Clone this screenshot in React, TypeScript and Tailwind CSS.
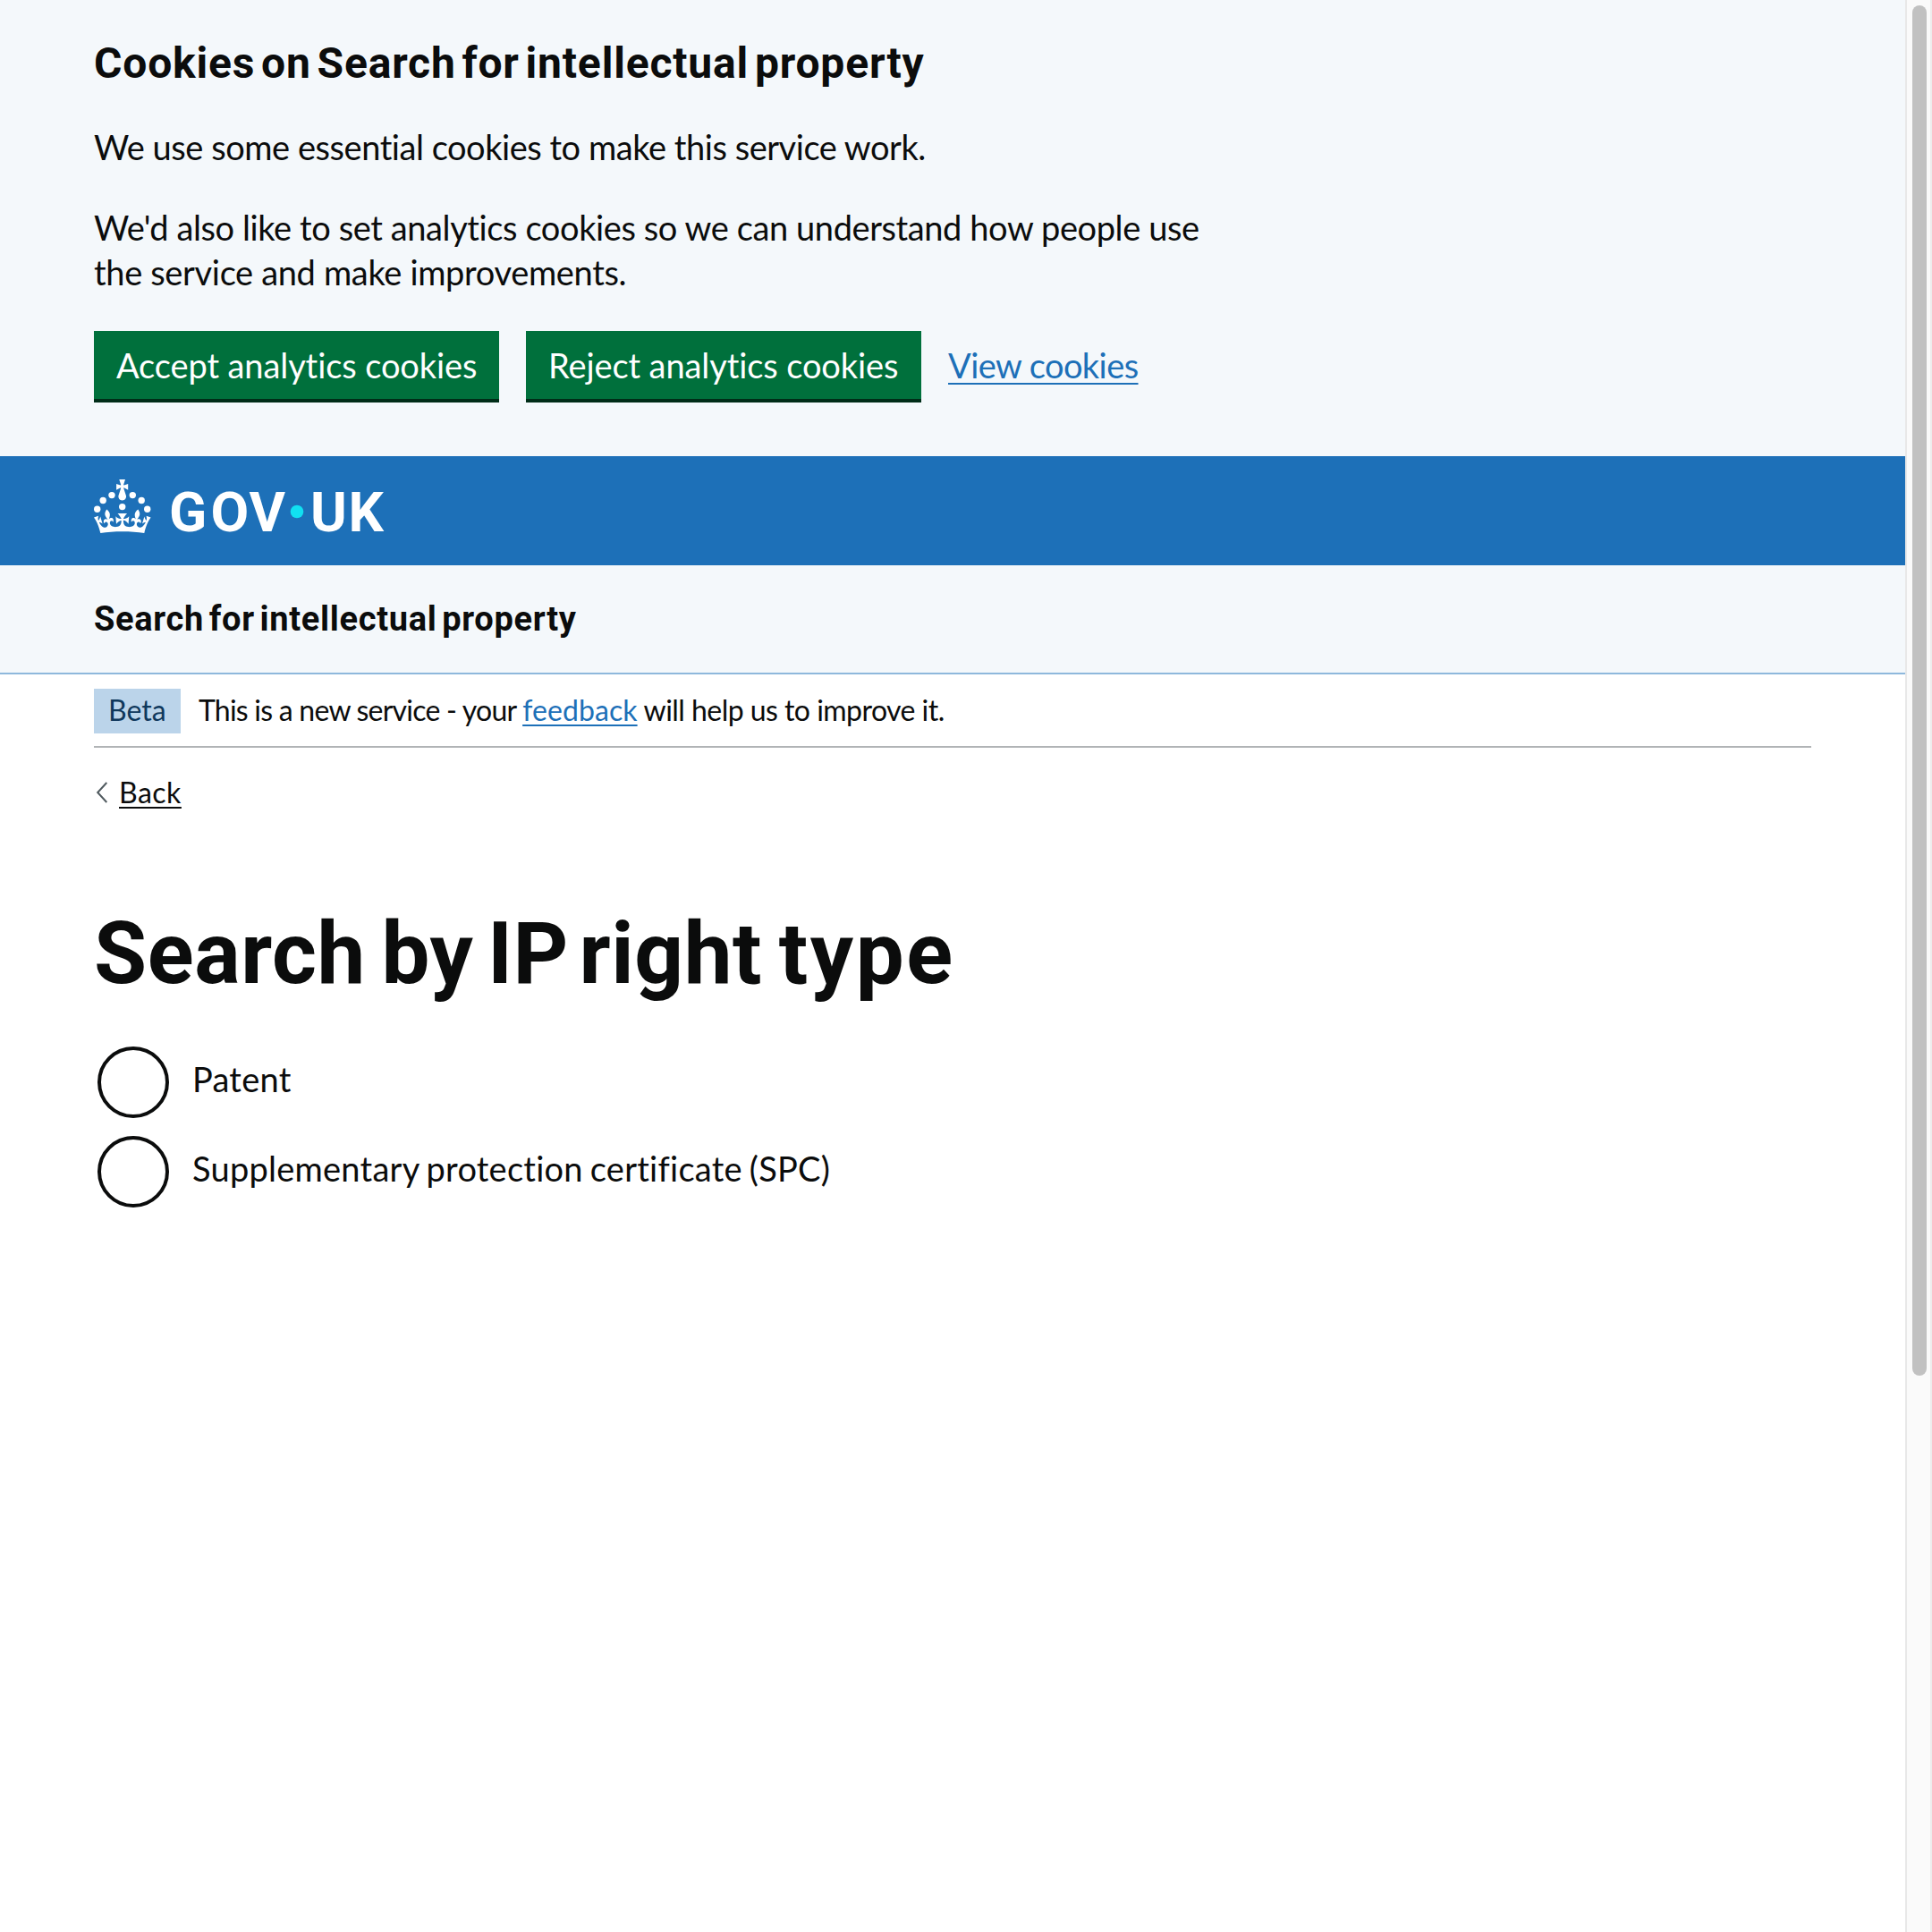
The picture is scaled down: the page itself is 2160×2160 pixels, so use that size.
function Logo() {
  return (
    <svg viewBox="0 0 324 60" className="block h-[60px] w-[324px] overflow-visible fill-white" role="img" aria-label="GOV.UK">
      <circle cx="20" cy="17.6" r="3.7" />
      <circle cx="10.2" cy="23.5" r="3.7" />
      <circle cx="3.7" cy="33.2" r="3.7" />
      <circle cx="31.7" cy="30.6" r="3.7" />
      <circle cx="43.3" cy="17.6" r="3.7" />
      <circle cx="53.2" cy="23.5" r="3.7" />
      <circle cx="59.7" cy="33.2" r="3.7" />
      <path d="M33.1,9.8c.2-.1.3-.3.5-.5l4.6,2.4v-6.8l-4.6,1.5c-.1-.2-.3-.3-.5-.5l1.9-5.9h-6.7l1.9,5.9c-.2.1-.3.3-.5.5l-4.6-1.5v6.8l4.6-2.4c.1.2.3.3.5.5l-2.6,8c-.9,2.8,1.2,5.7,4.1,5.7h0c3,0,5.1-2.9,4.1-5.7l-2.6-8ZM37,37.9s-3.4,3.8-4.1,6.1c2.2,0,4.2-.5,6.4-2.8l-.7,8.5c-2-2.8-4.4-4.1-5.7-3.8.1,3.1.5,6.7,5.8,7.2,3.7.3,6.7-1.5,7-3.8.4-2.6-2-4.3-3.7-1.6-1.4-4.5,2.4-6.1,4.9-3.2-1.9-4.5-1.8-7.7,2.4-10.9,3,4,2.6,7.3-1.2,11.1,2.4-1.3,6.2,0,4,4.6-1.2-2.8-3.7-2.2-4.2.2-.3,1.7.7,3.7,3,4.2,1.9.3,4.7-.9,7-5.9-1.3,0-2.4.7-3.9,1.7l2.4-8c.6,2.3,1.4,3.7,2.2,4.5.6-1.6.5-2.8,0-5.3l5,1.8c-2.6,3.6-5.2,8.7-7.3,17.5-7.4-1.1-15.7-1.7-24.5-1.7h0c-8.8,0-17.1.6-24.5,1.7-2.1-8.9-4.7-13.9-7.3-17.5l5-1.8c-.5,2.5-.6,3.7,0,5.3.8-.8,1.6-2.3,2.2-4.5l2.4,8c-1.5-1-2.6-1.7-3.9-1.7,2.3,5,5.2,6.2,7,5.9,2.3-.4,3.3-2.4,3-4.2-.5-2.4-3-3.1-4.2-.2-2.2-4.6,1.6-6,4-4.6-3.7-3.7-4.2-7.1-1.2-11.1,4.2,3.2,4.3,6.4,2.4,10.9,2.5-2.8,6.3-1.3,4.9,3.2-1.8-2.7-4.1-1-3.7,1.6.3,2.3,3.3,4.1,7,3.8,5.4-.5,5.7-4.2,5.8-7.2-1.3-.2-3.7,1-5.7,3.8l-.7-8.5c2.2,2.3,4.2,2.7,6.4,2.8-.7-2.3-4.1-6.1-4.1-6.1h10.6,0Z" />
      <text y="58" x="84 130.5 173.6" className="font-['Roboto',sans-serif] text-[62px] font-bold">GOV</text>
      <text y="58" x="242 284.5" className="font-['Roboto',sans-serif] text-[62px] font-bold">UK</text>
      <circle cx="227" cy="36" r="7.3" className="fill-[#11e0f1]" />
    </svg>
  );
}

function Radio({ label }: { label: string }) {
  return (
    <label className="flex h-20 pl-1">
      <input type="radio" name="ip-right" className="size-20 shrink-0 appearance-none rounded-full border-4 border-[#0b0c0c] bg-transparent" />
      <span className="mt-[11px] ml-[26px] leading-[50px] tracking-[0.25px] [word-spacing:-2px] whitespace-nowrap">{label}</span>
    </label>
  );
}

const button =
  "h-[76px] bg-[#00703c] px-[25px] text-left leading-[50px] tracking-[-0.1px] whitespace-nowrap text-white shadow-[0_4px_0_#002d18]";
const link = "underline decoration-2 [text-decoration-skip-ink:none]";

export default function App() {
  return (
    <div className="flex h-[2160px] w-[2160px] overflow-hidden bg-white font-['Lato',sans-serif] text-[38px] text-[#0b0c0c]">
      <div className="w-[2130px]">
        <section className="h-[510px] bg-[#f4f8fb] px-[105px] pt-[41px]">
          <h2 className="font-['Roboto',sans-serif] text-5xl leading-[60px] font-bold tracking-[0.83px] [word-spacing:-6px]">
            Cookies on Search for intellectual property
          </h2>
          <p className="mt-[38px] leading-[50px] tracking-[-0.46px]">We use some essential cookies to make this service work.</p>
          <p className="mt-10 leading-[50px]">
            <span className="tracking-[-0.4px]">We'd also like to set analytics cookies so we can understand how people use</span>
            <br />
            <span className="tracking-[-0.34px]">the service and make improvements.</span>
          </p>
          <div className="mt-[41px] flex items-start">
            <button className={`${button} w-[453px]`}>Accept analytics cookies</button>
            <button className={`${button} ml-[30px] w-[442px]`}>Reject analytics cookies</button>
            <a className={`${link} mt-[13px] ml-[30px] leading-[50px] tracking-[-0.57px] text-[#1d70b8] underline-offset-[5px]`}>View cookies</a>
          </div>
        </section>
        <header>
          <div className="h-[122px] bg-[#1d70b8] px-[105px] pt-[26px]">
            <Logo />
          </div>
          <div className="h-[122px] border-b-2 border-[#8eb8dc] bg-[#f4f8fb] px-[105px] pt-[35px] font-['Roboto',sans-serif] leading-[50px] font-bold tracking-[0.7px] [word-spacing:-4.5px]">
            Search for intellectual property
          </div>
        </header>
        <main className="px-[105px]">
          <div className="flex h-[82px] border-b-2 border-[#b1b4b6] pt-4 text-[32px] leading-10">
            <strong className="h-[50px] w-[97px] bg-[#bbd4ea] pt-1 pl-4 font-normal text-[#0f385c]">Beta</strong>
            <span className="mt-1 ml-5 whitespace-pre">
              <span className="tracking-[-0.77px]">This is a new service - your </span>
              <a className={`${link} tracking-[0.09px] text-[#1d70b8] underline-offset-4`}>feedback</a>
              <span className="tracking-[-0.54px]"> will help us to improve it.</span>
            </span>
          </div>
          <div className="mt-[30px] flex h-10 text-[32px] leading-10">
            <svg viewBox="0 0 14 24" className="mt-2 ml-[2px] h-6 w-[14px] fill-none stroke-[#505a5f] stroke-2">
              <path d="M12.3 1 L2.2 12 L12.3 23" />
            </svg>
            <a className={`${link} ml-3 tracking-[0.5px] underline-offset-4`}>Back</a>
          </div>
          <h1 className="mt-[110px] font-['Roboto',sans-serif] text-8xl leading-[100px] font-bold tracking-[0.6px]">
            <span className="[word-spacing:-7px]">Search </span>
            <span className="[word-spacing:-9px]">by </span>
            <span className="[word-spacing:-13px]">IP </span>
            <span className="[word-spacing:-6px]">right </span>
            <span className="tracking-[2.6px]">type</span>
          </h1>
          <div className="mt-[54px] flex flex-col gap-5">
            <Radio label="Patent" />
            <Radio label="Supplementary protection certificate (SPC)" />
          </div>
        </main>
      </div>
      <div className="w-[30px] border-x-2 border-l-[#e8e8e8] border-r-[#ededed] bg-[#fafafa] pt-1.5 pl-1.5">
        <div className="h-[1532px] w-4 rounded-full bg-[#c1c1c1]" />
      </div>
    </div>
  );
}
